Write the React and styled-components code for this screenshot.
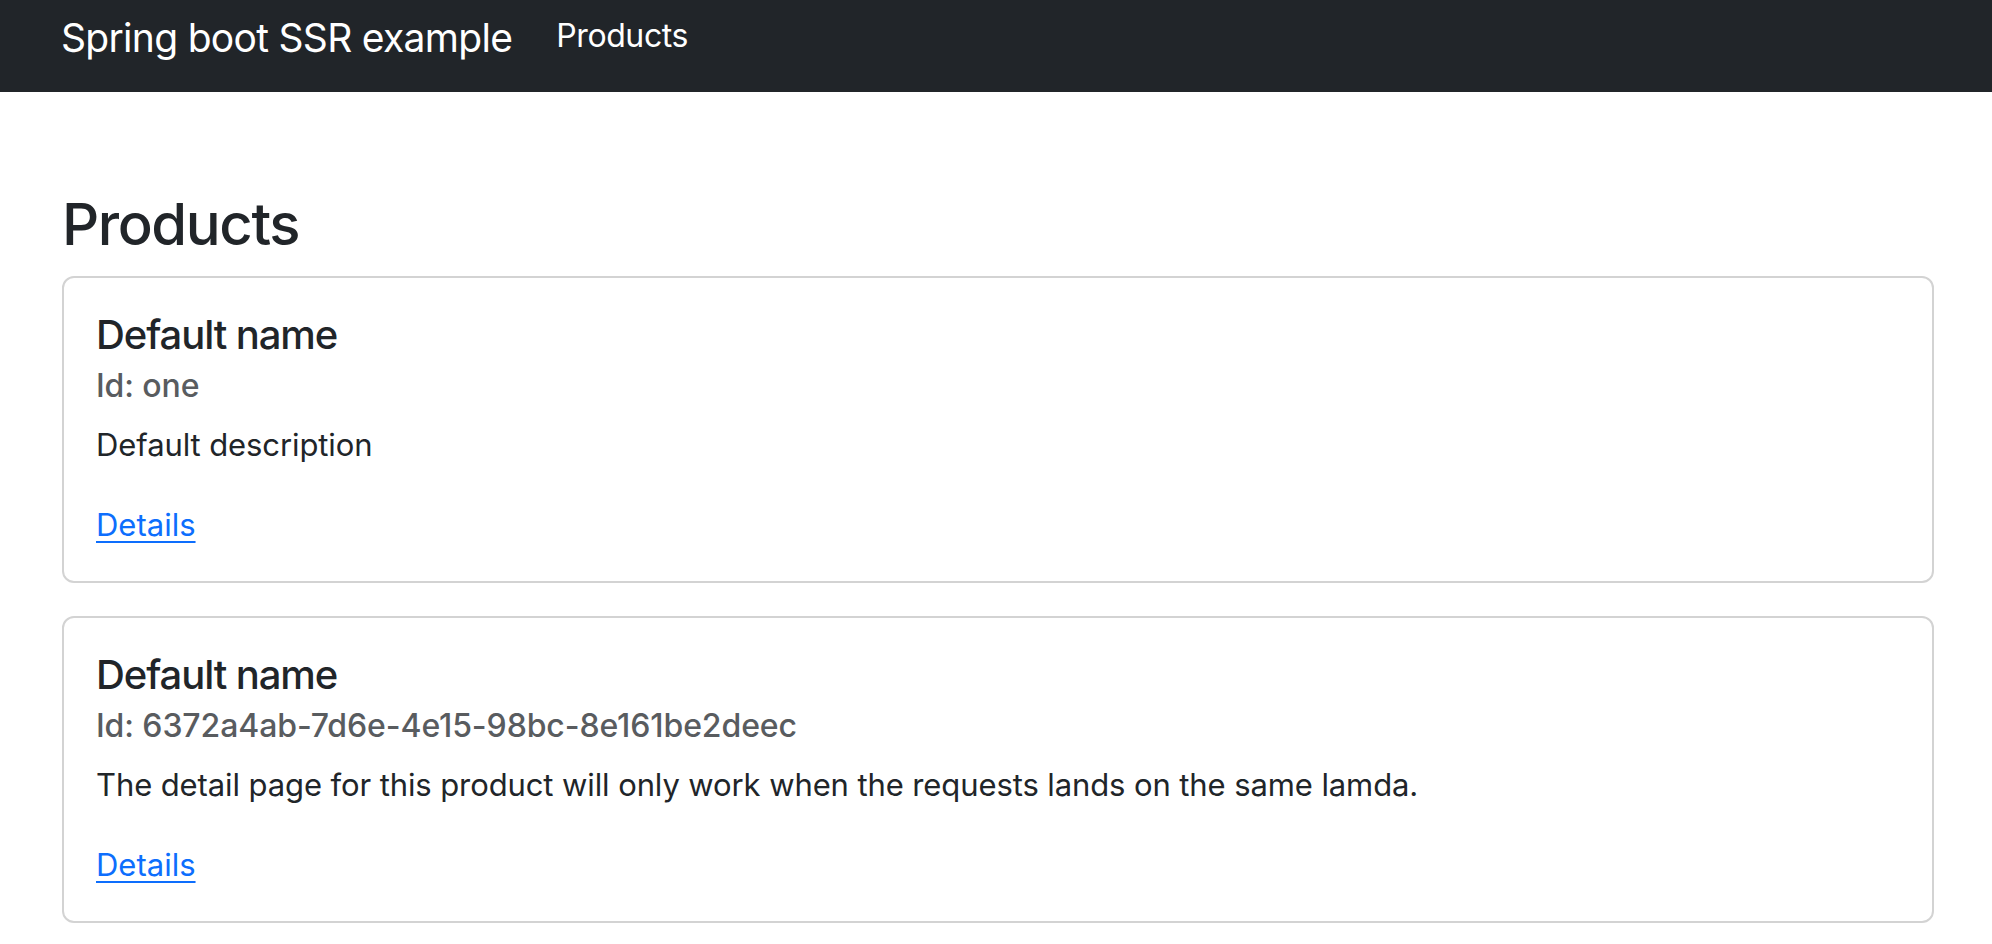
import React from 'react'
import styled, { createGlobalStyle } from 'styled-components'

const GlobalStyle = createGlobalStyle`
  *, *::before, *::after {
    box-sizing: border-box;
  }
  body {
    margin: 0;
    background: #fff;
    color: #212529;
    font-family: Inter, "Noto Sans", "Liberation Sans", sans-serif;
    font-size: 31px;
    line-height: 1.5;
  }
`

const products = [
  {
    id: 'one',
    name: 'Default name',
    description: 'Default description',
  },
  {
    id: '6372a4ab-7d6e-4e15-98bc-8e161be2deec',
    name: 'Default name',
    description:
      'The detail page for this product will only work when the requests lands on the same lamda.',
  },
]

const Navbar = styled.nav`
  height: 92px;
  background: #212529;
`

const NavContainer = styled.div`
  display: flex;
  align-items: flex-start;
  padding: 0 58px 0 61px;
`

const Brand = styled.a`
  margin-top: 8px;
  margin-right: 44px;
  color: #fff;
  font-size: 39px;
  line-height: 60px;
  letter-spacing: -0.7px;
  text-decoration: none;
`

const NavLink = styled.a`
  margin-top: 12px;
  color: #fff;
  font-size: 32px;
  line-height: 48px;
  letter-spacing: -0.4px;
  text-decoration: none;
`

const Main = styled.main`
  margin-top: 96px;
  padding: 0 58px 0 62px;
`

const PageTitle = styled.h2`
  margin: 0 0 16px;
  font-size: 58px;
  font-weight: 500;
  line-height: 72px;
  letter-spacing: -1.4px;
`

const CardList = styled.div`
  display: flex;
  flex-direction: column;
  gap: 33px;
`

const Card = styled.div`
  border: 2px solid #d3d3d3;
  border-radius: 12px;
  background: #fff;
`

const CardBody = styled.div`
  padding: 33px 32px 32px;
`

const CardTitle = styled.h5`
  margin: 0 0 16px;
  font-size: 40px;
  font-weight: 500;
  line-height: 48px;
  letter-spacing: -1.1px;
`

const CardSubtitle = styled.h6`
  margin: -8px 0 16px;
  color: #595c5f;
  font-size: 32px;
  font-weight: 500;
  line-height: 38px;
  letter-spacing: -0.1px;
`

const CardText = styled.p`
  margin: 0 0 32px;
  line-height: 48px;
  letter-spacing: -0.1px;
`

const CardLink = styled.a`
  color: #0d6efd;
  line-height: 48px;
  text-decoration: underline;
  text-decoration-thickness: 2px;
  text-underline-offset: 5px;
`

export default function App() {
  return (
    <>
      <GlobalStyle />
      <Navbar>
        <NavContainer>
          <Brand href="#">Spring boot SSR example</Brand>
          <NavLink href="#">Products</NavLink>
        </NavContainer>
      </Navbar>
      <Main>
        <PageTitle>Products</PageTitle>
        <CardList>
          {products.map((product) => (
            <Card key={product.id}>
              <CardBody>
                <CardTitle>{product.name}</CardTitle>
                <CardSubtitle>Id: {product.id}</CardSubtitle>
                <CardText>{product.description}</CardText>
                <CardLink href="#">Details</CardLink>
              </CardBody>
            </Card>
          ))}
        </CardList>
      </Main>
    </>
  )
}
